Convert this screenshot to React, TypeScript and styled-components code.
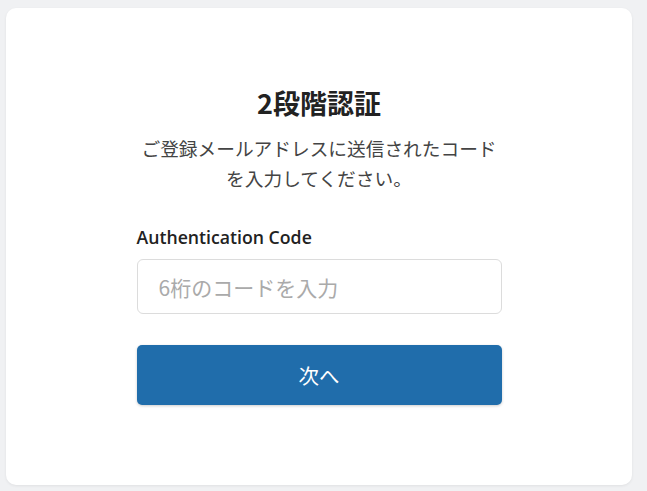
import React from "react";
import styled, { createGlobalStyle } from "styled-components";

const Global = createGlobalStyle`
  html, body { margin: 0; padding: 0; background: #f0f1f3; }
  body { font-family: "Noto Sans CJK JP", "Open Sans", sans-serif; }
  * { box-sizing: border-box; }
`;

const Page = styled.div`
  width: 647px;
  height: 491px;
  padding: 8px 15px 6px 6px;
  background: #f0f1f3;
`;

const Card = styled.div`
  height: 477px;
  background: #ffffff;
  border-radius: 10px;
  box-shadow: 0 1px 3px rgba(0, 0, 0, 0.07);
  padding-top: 77px;
  display: flex;
  justify-content: center;
`;

const Form = styled.form`
  width: 365px;
  display: flex;
  flex-direction: column;
`;

const Title = styled.h1`
  margin: 0;
  font-family: "Noto Sans CJK JP", sans-serif;
  font-size: 27px;
  line-height: 36px;
  font-weight: 700;
  color: #222222;
  text-align: center;
`;

const Lead = styled.p`
  margin: 12px 0 0;
  font-family: "Noto Sans CJK JP", sans-serif;
  font-size: 18.7px;
  line-height: 30px;
  font-weight: 400;
  color: #444444;
  text-align: center;
`;

const Label = styled.label`
  margin-top: 32px;
  font-family: "Open Sans", sans-serif;
  font-size: 17.7px;
  line-height: 24px;
  font-weight: 600;
  color: #222222;
`;

const Input = styled.input`
  margin-top: 10px;
  height: 55px;
  width: 100%;
  border: 1px solid #dcdcdc;
  border-radius: 6px;
  padding: 0 21px;
  font-family: "Noto Sans CJK JP", sans-serif;
  font-size: 21px;
  color: #333333;
  outline: none;
  background: #ffffff;
  &::placeholder { color: #aaaaaa; }
`;

const Button = styled.button`
  margin-top: 31px;
  height: 60px;
  width: 100%;
  border: none;
  border-radius: 5px;
  background: #206dab;
  color: #ffffff;
  font-family: "Noto Sans CJK JP", sans-serif;
  font-size: 20.5px;
  box-shadow: 0 1px 3px rgba(0, 0, 0, 0.2);
  cursor: pointer;
`;

export default function App() {
  return (
    <>
      <Global />
      <Page>
        <Card>
          <Form onSubmit={(e) => e.preventDefault()}>
            <Title>2段階認証</Title>
            <Lead>ご登録メールアドレスに送信されたコードを入力してください。</Lead>
            <Label htmlFor="code">Authentication Code</Label>
            <Input id="code" placeholder="6桁のコードを入力" />
            <Button type="submit">次へ</Button>
          </Form>
        </Card>
      </Page>
    </>
  );
}
